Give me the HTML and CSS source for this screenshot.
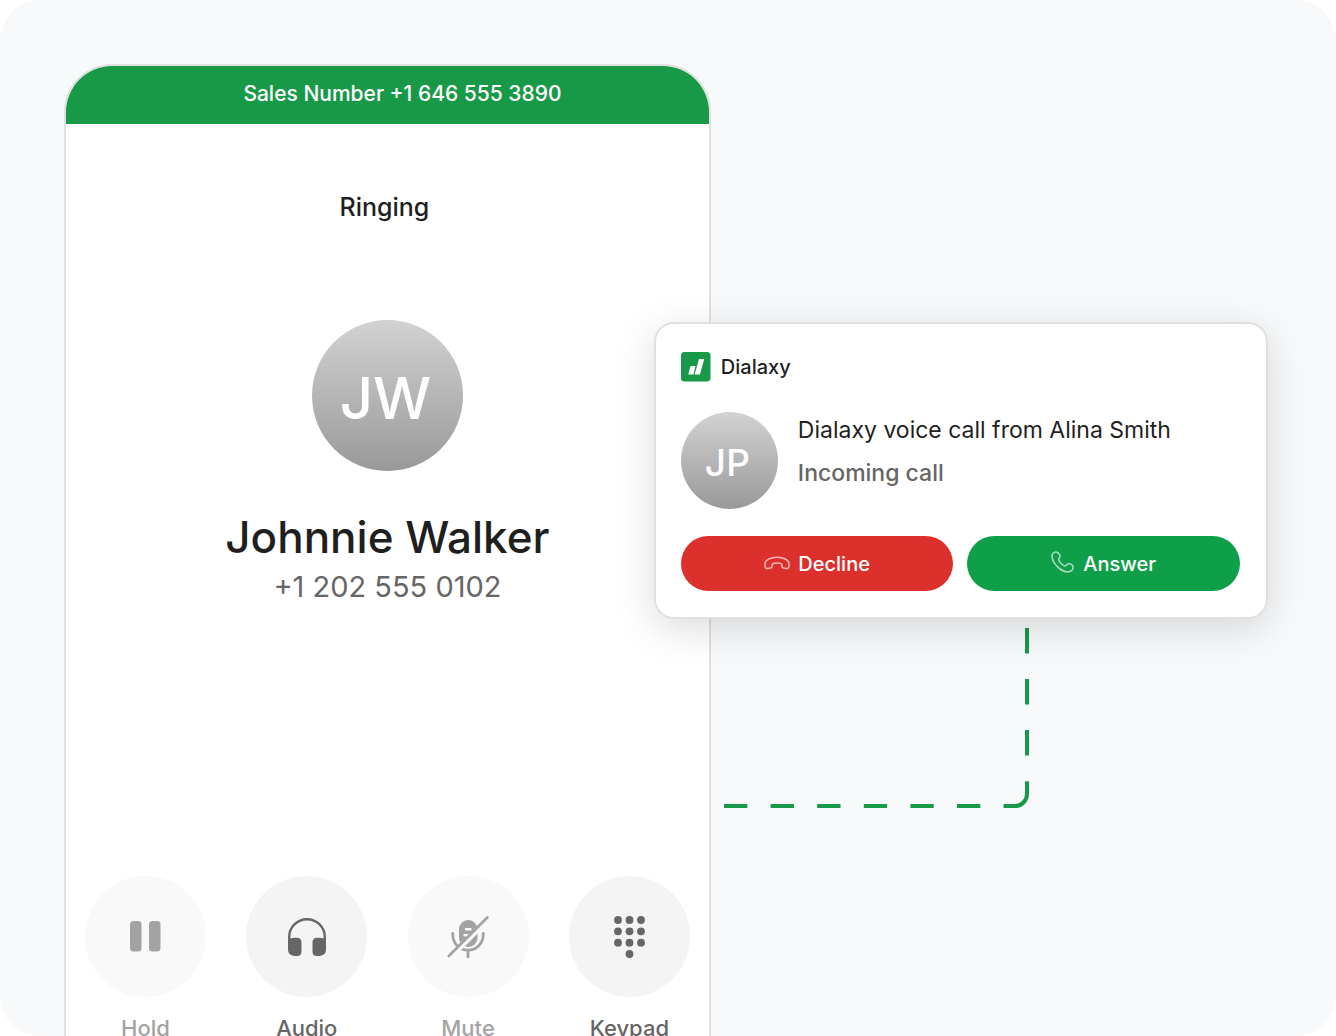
FILE: index.html
```
<!DOCTYPE html>
<html lang="en">
<head>
    <meta charset="utf-8">
    <meta name="viewport" content="width=device-width, initial-scale=1">
    <title>Dialaxy</title>
    <link rel="stylesheet" href="styles.css">
</head>
<body>

<main class="scene">
    <section class="phone">
        <header class="phone-header">Sales Number +1 646 555 3890</header>
        <p class="status">Ringing</p>
        <div class="avatar avatar-large">JW</div>
        <h1 class="caller-name">Johnnie Walker</h1>
        <p class="caller-number">+1 202 555 0102</p>

        <div class="controls">
            <button class="control" disabled>
                <span class="control-icon">
                    <svg width="31" height="31" viewBox="0 0 31 31" fill="currentColor">
                        <rect width="11.500" height="30.500" rx="3.500"/>
                        <rect x="19" width="11.500" height="30.500" rx="3.500"/>
                    </svg>
                </span>
                Hold
            </button>
            <button class="control">
                <span class="control-icon">
                    <svg width="38" height="38" viewBox="0 0 38 38" fill="currentColor">
                        <path d="M1.200 25V19a17.800 17.800 0 0 1 35.600 0v6" fill="none" stroke="currentColor" stroke-width="2.400"/>
                        <path d="M0 21.500C3 20 6 19.800 9 19.800Q13.500 20 13.500 24.500V33.500Q13.500 38 9 38C3.500 38 0 36.500 0 31Z"/>
                        <path d="M38 21.500C35 20 32 19.800 29 19.800Q24.500 20 24.500 24.500V33.500Q24.500 38 29 38C34.500 38 38 36.500 38 31Z"/>
                    </svg>
                </span>
                Audio
            </button>
            <button class="control" disabled>
                <span class="control-icon">
                    <svg width="42" height="42" viewBox="0 0 42 42" fill="none" stroke-linecap="round">
                        <rect x="12" y="4" width="18.500" height="27" rx="9" fill="currentColor"/>
                        <path d="M19 13.300h4.500M17.500 19.200h4" stroke="#f9f9f9" stroke-width="2.400"/>
                        <path d="M5.800 17.500v1.500a15.200 15.200 0 0 0 30.400 0v-1.500M21 35v6" stroke="currentColor" stroke-width="2.800"/>
                        <path d="M42.200 3.200L3.700 41.700" stroke="#f9f9f9" stroke-width="4"/>
                        <path d="M40.300 1.500L1.800 40" stroke="currentColor" stroke-width="2.600"/>
                    </svg>
                </span>
                Mute
            </button>
            <button class="control">
                <span class="control-icon">
                    <svg width="31" height="42" viewBox="0 0 31 42" fill="currentColor">
                        <circle cx="4" cy="4" r="3.900"/>
                        <circle cx="15.500" cy="4" r="3.900"/>
                        <circle cx="27" cy="4" r="3.900"/>
                        <circle cx="4" cy="15.300" r="3.900"/>
                        <circle cx="15.500" cy="15.300" r="3.900"/>
                        <circle cx="27" cy="15.300" r="3.900"/>
                        <circle cx="4" cy="26.700" r="3.900"/>
                        <circle cx="15.500" cy="26.700" r="3.900"/>
                        <circle cx="27" cy="26.700" r="3.900"/>
                        <circle cx="15.500" cy="38" r="3.900"/>
                    </svg>
                </span>
                Keypad
            </button>
        </div>
    </section>

    <div class="side">
        <section class="call-card">
            <div class="brand">
                <svg width="30" height="30" viewBox="0 0 30 30">
                    <rect width="29.500" height="29.500" rx="3.500" fill="#189947"/>
                    <path d="M9.500 14h5l-2 8.500h-5.200zM18 7h5.200l-4.200 15.500h-5.400z" fill="#fff"/>
                </svg>
                <span>Dialaxy</span>
            </div>
            <div class="call-info">
                <div class="avatar avatar-small">JP</div>
                <div>
                    <p class="call-title">Dialaxy voice call from Alina Smith</p>
                    <p class="call-subtitle">Incoming call</p>
                </div>
            </div>
            <div class="call-actions">
                <button class="action decline">
                    <svg width="26" height="16" viewBox="0 0 26 16">
                        <path d="M1 8C1 3.500 7 1.300 13 1.300S25 3.500 25 8V9.500C25 11.800 23.800 12.800 22.500 12.600L19.500 12.100C18.200 11.800 17.800 11 17.800 9.800V8.200C16 6.500 10 6.500 8.200 8.200V9.800C8.200 11 7.800 11.800 6.500 12.100L3.500 12.600C2.200 12.800 1 11.800 1 9.500Z"/>
                    </svg>
                    Decline
                </button>
                <button class="action answer">
                    <svg width="24" height="26" viewBox="0 0 24 26">
                        <path d="M1 5C.8 3 3 1.200 4.600 1C6.500.8 8.500 3 9 4.800C9.400 6.200 7.500 7.500 7.600 8.800C7.800 10.500 12 15 14 15C15.400 15 16 12.600 18 12.600C20 12.700 22.300 14.600 22.200 16.600C22 19 19.500 21 17 21C10 21 1 12 1 5Z"/>
                    </svg>
                    Answer
                </button>
            </div>
        </section>

        <!-- dashed line from the card back to the phone -->
        <svg class="connector" width="305" height="180" viewBox="0 0 305 180">
            <path d="M303 0V152" stroke-dasharray="25.500 25.500"/>
            <path d="M303 153.300V166a12 12 0 0 1-12 12H279.500"/>
            <path d="M0 178H257" stroke-dasharray="23.300 23.300"/>
        </svg>
    </div>
</main>

</body>
</html>
```

FILE: styles.css
```
:root {
    --scene-bg: #f8f9fb;
    --text-color: #1f1f1f;
    --muted-color: #666666;
    --border-color: #e0e0e0;
    --green: #189947;
}

* {
    box-sizing: border-box;
}

body {
    margin: 0;
    background-color: #ffffff;
    color: var(--text-color);
    font-family: Inter, "Liberation Sans", sans-serif;
}

h1, p {
    margin: 0;
}

button {
    border: none;
    font-family: inherit;
    cursor: pointer;
}

svg {
    display: block;
    flex: none;
}

.scene {
    display: flex;
    height: 100vh;
    padding: 64px 68px 0 64px;
    border-radius: 40px;
    background-color: var(--scene-bg);
    overflow: hidden;
}

.phone {
    flex: 645 1 0;
    min-width: 0;
    align-self: flex-start;
    display: flex;
    flex-direction: column;
    align-items: center;
    padding-bottom: 40px;
    border: 2px solid var(--border-color);
    border-radius: 48px;
    background-color: #ffffff;
}

.phone-header {
    align-self: stretch;
    padding: 0 0 2px 30px;
    border-radius: 46px 46px 0 0;
    background-color: var(--green);
    color: #ffffff;
    font-size: 21px;
    font-weight: 500;
    line-height: 56px;
    text-align: center;
}

.status {
    margin-top: 67px;
    padding-right: 6px;
    font-size: 25px;
    font-weight: 500;
    line-height: 32px;
}

.avatar {
    display: flex;
    flex: none;
    align-items: center;
    justify-content: center;
    border-radius: 50%;
    background: linear-gradient(#d2d2d2, #999999);
    color: #ffffff;
    font-weight: 500;
}

.avatar-large {
    width: 151px;
    height: 151px;
    margin-top: 97px;
    padding: 4px 4px 0 0;
    font-size: 58px;
}

.avatar-small {
    width: 97px;
    height: 97px;
    padding: 4px 4px 0 0;
    font-size: 37px;
}

.caller-name {
    margin-top: 40px;
    font-size: 44px;
    font-weight: 500;
    line-height: 52px;
}

.caller-number {
    margin-top: 6px;
    color: var(--muted-color);
    font-size: 29px;
    line-height: 36px;
}

.controls {
    align-self: stretch;
    display: flex;
    justify-content: space-between;
    margin-top: 271px;
    padding: 0 19px;
}

.control {
    display: flex;
    flex-direction: column;
    align-items: center;
    gap: 15px;
    padding: 0;
    background: none;
    color: var(--muted-color);
    font-size: 22px;
    font-weight: 500;
    line-height: 32px;
}

.control-icon {
    display: flex;
    align-items: center;
    justify-content: center;
    width: 121px;
    height: 121px;
    border-radius: 50%;
    background-color: #f4f4f4;
}

.control:disabled {
    color: #a3a3a3;
    cursor: default;
}

.control:disabled .control-icon {
    background-color: #f9f9f9;
}

.side {
    flex: 559 1 0;
    min-width: 0;
    padding-top: 258px;
}

/* the card hangs over the phone's right edge */
.call-card {
    position: relative;
    margin-left: -57px;
    padding: 28px 26px 26px 25px;
    border: 2px solid var(--border-color);
    border-radius: 20px;
    background-color: #ffffff;
    box-shadow: 0 10px 40px rgba(0, 0, 0, 0.14);
}

.brand {
    display: flex;
    align-items: center;
    gap: 10px;
    font-size: 20px;
    font-weight: 500;
    line-height: 30px;
}

.call-info {
    display: flex;
    gap: 20px;
    margin-top: 30px;
}

.call-title,
.call-subtitle {
    font-size: 23px;
    line-height: 36px;
}

.call-subtitle {
    margin-top: 7px;
    color: var(--muted-color);
    font-weight: 500;
}

.call-actions {
    display: flex;
    gap: 14px;
    margin-top: 27px;
}

.action {
    display: flex;
    flex: 1;
    align-items: center;
    justify-content: center;
    gap: 8px;
    height: 55px;
    border-radius: 28px;
    color: #ffffff;
    font-size: 20px;
    font-weight: 500;
}

.action svg {
    fill: none;
    stroke: rgba(255, 255, 255, 0.65);
    stroke-width: 1.5;
}

.decline {
    background-color: #dc302c;
}

.answer {
    background-color: #109f49;
}

.connector {
    margin: 9px 0 0 13px;
    fill: none;
    stroke: var(--green);
    stroke-width: 4;
}
```
